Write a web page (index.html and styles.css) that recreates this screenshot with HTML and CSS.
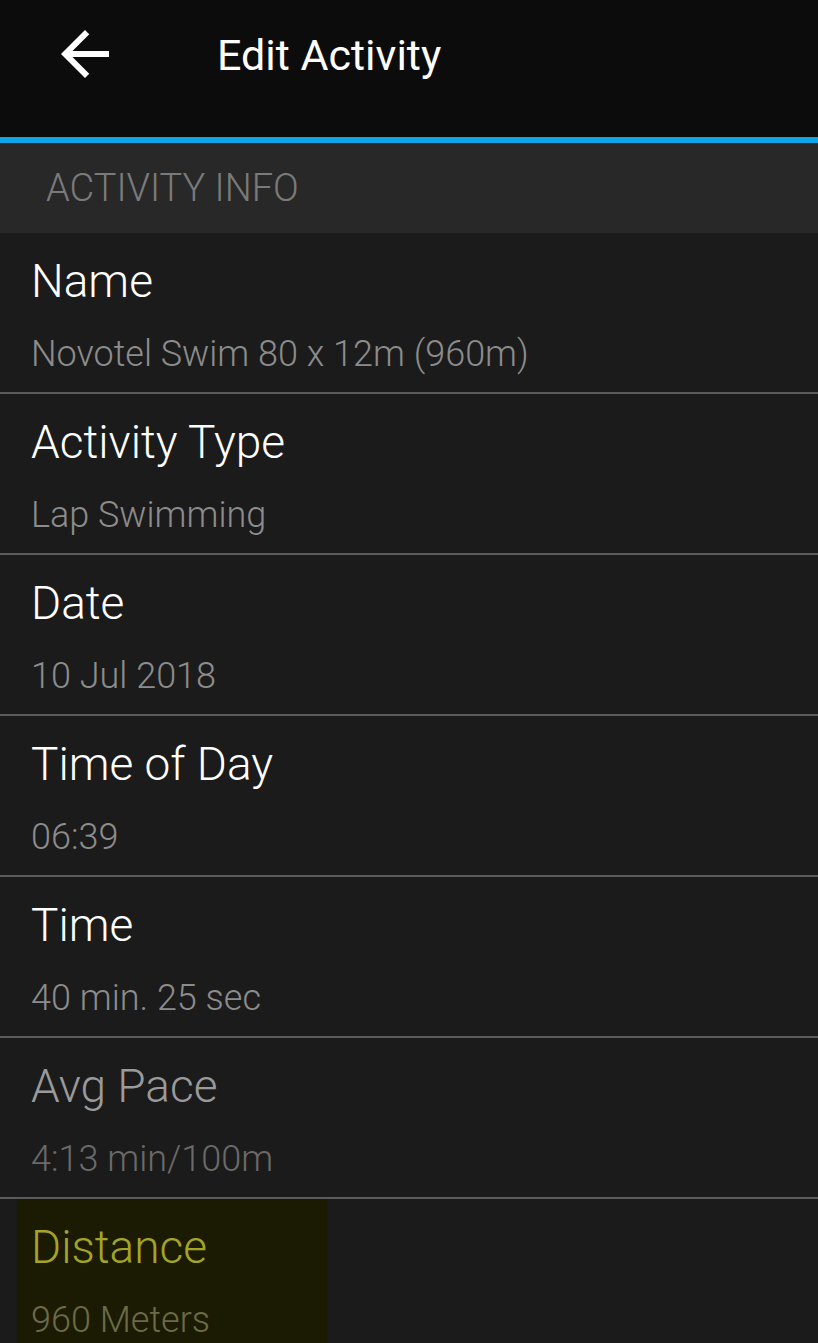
FILE: index.html
```html
<!DOCTYPE html>
<html>
<head>
<meta charset="utf-8">
<link rel="stylesheet" href="styles.css">
</head>
<body>
<div class="screen">
  <header class="topbar">
    <svg class="back" viewBox="0 0 24 24" width="72" height="72"><path fill="#fff" d="M20 11H7.83l5.59-5.59L12 4l-8 8 8 8 1.41-1.41L7.83 13H20v-2z"/></svg>
    <h1 class="title">Edit Activity</h1>
  </header>
  <div class="accent"></div>
  <div class="section">ACTIVITY INFO</div>
  <ul class="list">
    <li class="row"><div class="label">Name</div><div class="value">Novotel Swim 80 x 12m (960m)</div></li>
    <li class="row"><div class="label">Activity Type</div><div class="value">Lap Swimming</div></li>
    <li class="row"><div class="label">Date</div><div class="value">10 Jul 2018</div></li>
    <li class="row"><div class="label">Time of Day</div><div class="value">06:39</div></li>
    <li class="row"><div class="label">Time</div><div class="value">40 min. 25 sec</div></li>
    <li class="row disabled"><div class="label">Avg Pace</div><div class="value">4:13 min/100m</div></li>
    <li class="row focused"><div class="focus-box"><div class="label">Distance</div><div class="value">960 Meters</div></div></li>
  </ul>
</div>
</body>
</html>
```
FILE: styles.css
```css
html, body {
  margin: 0;
  padding: 0;
  background: #1b1b1b;
}
.screen {
  width: 818px;
  height: 1343px;
  overflow: hidden;
  background: #1b1b1b;
  font-family: Roboto, "Noto Sans", sans-serif;
}
.topbar {
  height: 137px;
  background: #0c0c0c;
  display: flex;
  align-items: flex-start;
  padding-left: 49px;
  box-sizing: border-box;
}
.back {
  margin-top: 18px;
  flex: none;
}
.title {
  margin: 30px 0 0 96px;
  font-size: 43px;
  line-height: 50px;
  font-weight: 400;
  color: #ffffff;
}
.accent {
  height: 6px;
  background: #0fa6e8;
}
.section {
  height: 90px;
  background: #282828;
  color: #7a7a7a;
  font-size: 38px;
  font-weight: 300;
  line-height: 90px;
  padding-left: 46px;
  box-sizing: border-box;
}
.list {
  list-style: none;
  margin: 0;
  padding: 0;
}
.row {
  border-bottom: 2px solid #5b5b5b;
  padding: 21px 0 17px 31px;
}
.label {
  font-size: 46px;
  line-height: 54px;
  font-weight: 300;
  color: #ffffff;
}
.value {
  margin-top: 25px;
  font-size: 36px;
  line-height: 42px;
  font-weight: 300;
  color: #8c8c8c;
}
.disabled .label { color: #9a9a9a; }
.disabled .value { color: #6a6a6a; }
.row.focused {
  border-bottom: none;
  padding: 0 0 0 17px;
}
.focus-box {
  width: 310px;
  background: #1b1b04;
  padding: 21px 0 17px 14px;
  box-sizing: border-box;
  height: 160px;
}
.focused .label { color: #a4a425; }
.focused .value { color: #6b6b45; }
```
